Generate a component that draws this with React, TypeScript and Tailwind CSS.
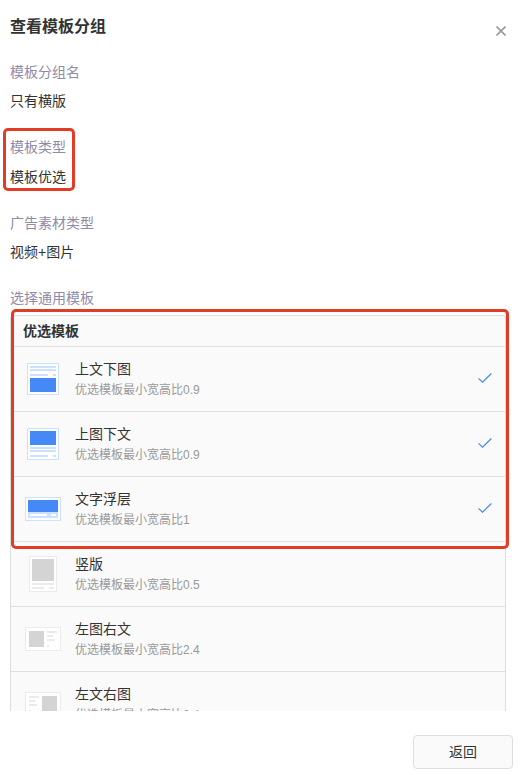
import type { ReactNode } from 'react'

interface FieldProps {
    label: string;
    value: string;
    className?: string;
    valueClassName?: string;
}

interface Template {
    name: string;
    ratio: string;
    icon: ReactNode;
    checked?: boolean;
}

const BLUE = '#4589f7'
const LIGHT_BLUE = '#cce1fe'
const GRAY = '#d4d4d4'
const LIGHT_GRAY = '#ebebeb'

// [x, y, width, height, fill]
type Block = [number, number, number, number, string]

function Thumb({ width, height, stroke, blocks }: { width: number; height: number; stroke: string; blocks: Block[] }) {
    return (
        <svg width={width} height={height} shapeRendering="crispEdges">
            <rect width={width} height={height} fill={stroke} />
            <rect x={1} y={1} width={width - 2} height={height - 2} fill="#fff" />
            {blocks.map(([x, y, w, h, fill], i) => (
                <rect key={i} x={x} y={y} width={w} height={h} fill={fill} />
            ))}
        </svg>
    )
}

const templates: Template[] = [
    {
        name: '上文下图',
        ratio: '0.9',
        checked: true,
        icon: (
            <Thumb width={32} height={32} stroke={LIGHT_BLUE} blocks={[
                [3, 3, 26, 2, LIGHT_BLUE],
                [3, 6, 26, 2, LIGHT_BLUE],
                [3, 11, 18, 2, LIGHT_BLUE],
                [26, 11, 3, 2, LIGHT_BLUE],
                [3, 15, 26, 14, BLUE],
            ]} />
        ),
    },
    {
        name: '上图下文',
        ratio: '0.9',
        checked: true,
        icon: (
            <Thumb width={32} height={32} stroke={LIGHT_BLUE} blocks={[
                [3, 3, 26, 14, BLUE],
                [3, 19, 26, 2, LIGHT_BLUE],
                [3, 22, 26, 2, LIGHT_BLUE],
                [3, 27, 18, 2, LIGHT_BLUE],
                [26, 27, 3, 2, LIGHT_BLUE],
            ]} />
        ),
    },
    {
        name: '文字浮层',
        ratio: '1',
        checked: true,
        icon: (
            <Thumb width={36} height={24} stroke={LIGHT_BLUE} blocks={[
                [3, 3, 30, 12, BLUE],
                [3, 15, 30, 6, LIGHT_BLUE],
                [5, 17, 17, 2, '#fff'],
                [26, 17, 5, 2, '#fff'],
            ]} />
        ),
    },
    {
        name: '竖版',
        ratio: '0.5',
        icon: (
            <Thumb width={28} height={36} stroke={LIGHT_GRAY} blocks={[
                [3, 3, 22, 22, GRAY],
                [3, 27, 22, 2, LIGHT_GRAY],
                [3, 31, 12, 2, LIGHT_GRAY],
                [20, 31, 5, 2, LIGHT_GRAY],
            ]} />
        ),
    },
    {
        name: '左图右文',
        ratio: '2.4',
        icon: (
            <Thumb width={36} height={24} stroke={LIGHT_GRAY} blocks={[
                [4, 4, 15, 16, GRAY],
                [22, 4, 10, 2, LIGHT_GRAY],
                [22, 8, 6, 2, LIGHT_GRAY],
                [22, 12, 8, 2, LIGHT_GRAY],
                [22, 18, 2, 2, LIGHT_GRAY],
            ]} />
        ),
    },
    {
        name: '左文右图',
        ratio: '2.4',
        icon: (
            <Thumb width={36} height={24} stroke={LIGHT_GRAY} blocks={[
                [4, 4, 10, 2, LIGHT_GRAY],
                [4, 8, 6, 2, LIGHT_GRAY],
                [4, 12, 8, 2, LIGHT_GRAY],
                [4, 18, 2, 2, LIGHT_GRAY],
                [17, 4, 15, 16, GRAY],
            ]} />
        ),
    },
]

function Field({ label, value, className = '', valueClassName = 'mt-[9px]' }: FieldProps) {
    return (
        <div className={className}>
            <div className="h-5 text-sm leading-5 text-[#8f8ca9]">{label}</div>
            <div className={`h-5 text-sm leading-5 ${valueClassName}`}>{value}</div>
        </div>
    )
}

export default function App() {
    return (
        <div className="relative flex h-[775px] w-[526px] flex-col overflow-hidden bg-white pl-[10px] font-['Liberation_Sans','Noto_Sans_CJK_SC',sans-serif] text-[#333]">
            <header className="flex h-[62px] shrink-0 justify-between pr-5">
                <h1 className="mt-[15px] h-6 text-base leading-6 font-bold">查看模板分组</h1>
                <button aria-label="关闭" className="mt-[26px] h-[10px] w-[10px]">
                    <svg width="10" height="10" viewBox="0 0 10 10" fill="none" stroke="#999" strokeWidth="1.6">
                        <path d="M.5 .5l9 9M9.5 .5l-9 9" />
                    </svg>
                </button>
            </header>

            <Field label="模板分组名" value="只有横版" />
            <Field label="模板类型" value="模板优选" className="mt-[26px]" valueClassName="mt-[10px]" />
            <Field label="广告素材类型" value="视频+图片" className="mt-[26px]" />
            <div className="mt-[26px] h-[27px] shrink-0 text-sm leading-5 text-[#8f8ca9]">选择通用模板</div>

            {/* Template list, cut off by the footer */}
            <main className="h-[396px] w-[496px] shrink-0 overflow-hidden">
                <div className="rounded-[3px] border border-[#dedede] bg-[#fafafa]">
                    <div className="h-[31px] border-b border-[#dedede] pl-3 text-sm leading-[30px] font-bold">优选模板</div>
                    {templates.map(t => (
                        <div key={t.name} className="flex h-[65px] items-center border-b border-[#dedede] pr-[13px]">
                            <div className="flex w-16 shrink-0 justify-center">{t.icon}</div>
                            <div className="flex-1">
                                <div className="h-5 text-sm leading-5">{t.name}</div>
                                <div className="mt-[1px] h-5 text-xs leading-5 text-[#999]">优选模板最小宽高比{t.ratio}</div>
                            </div>
                            {t.checked && (
                                <svg className="mb-[2px]" width="14" height="10" viewBox="0 0 14 10" fill="none" stroke={BLUE} strokeWidth="1.2">
                                    <path d="M.5 5.4l4 3.8L13.4 .5" />
                                </svg>
                            )}
                        </div>
                    ))}
                </div>
            </main>

            <footer className="mt-6 flex justify-end pr-[13px]">
                <button className="h-[34px] w-[100px] rounded border border-[#dedede] bg-[#fafafa] text-sm leading-8">返回</button>
            </footer>

            {/* Highlight marks over the content */}
            <div className="pointer-events-none absolute top-[128px] left-[3px] h-[63px] w-[72px] rounded-[5px] border-3 border-[#e23c26]" />
            <div className="pointer-events-none absolute top-[309px] left-[11px] h-[240px] w-[498px] rounded-[5px] border-3 border-[#e23c26]" />
        </div>
    )
}
